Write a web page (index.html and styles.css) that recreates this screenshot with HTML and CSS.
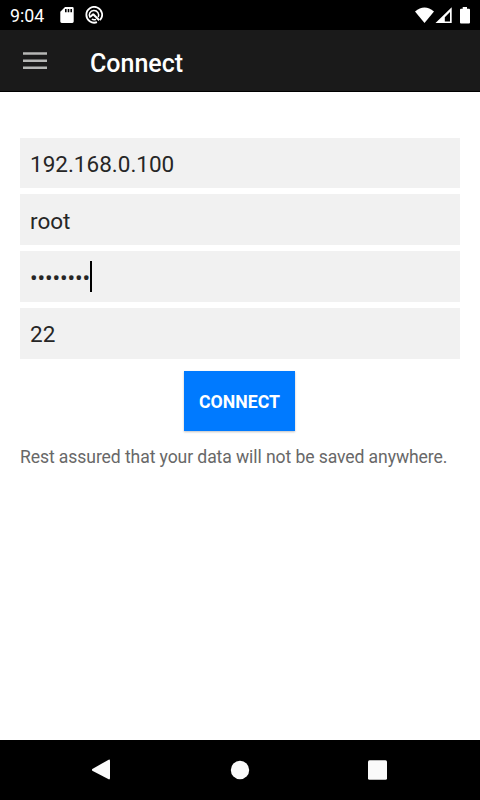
FILE: index.html
```html
<!DOCTYPE html>
<html lang="en">
<head>
<meta charset="utf-8">
<title>Connect</title>
<link rel="stylesheet" href="styles.css">
</head>
<body>
<div class="status">
  <span class="time">9:04</span>
  <svg class="sd" width="14" height="16" viewBox="0 0 14 16"><path fill="#fff" fill-rule="evenodd" d="M5 0h7.300Q13.700 0 13.700 1.400v13.200Q13.700 16 12.300 16H1.700Q.3 16 .3 14.600V4.800zM5 2v3.200h1.600V2zM7.700 2v3.200h1.600V2zM10.400 2v3.200H12V2z"/></svg>
  <svg class="ring" width="18" height="18" viewBox="0 0 18 18" fill="none" stroke="#fff"><path stroke-width="1.800" d="M15 14.200A7.900 7.900 0 1 0 12 16.200"/><path stroke-width="1.500" d="M5 11.600A4.700 4.700 0 1 1 13.200 11.200M6.800 13.200Q9 14.300 11 13.300"/><path stroke-width="2" d="M8 8L14.200 14.200M5 11L8.600 8"/></svg>
  <svg class="signals" width="56" height="18" viewBox="0 0 56 18" fill="#fff"><path d="M0 4.600Q9.500-3.600 19 4.600L9.500 16z"/><path fill-rule="evenodd" d="M36.700.3V16H20.500zM35 5L29.800 10.200V14.400H35z"/><path d="M47.700 0h4.300v1.700h2q1 0 1 1V15.500q0 1-1 1H46q-1 0-1-1V2.700q0-1 1-1h1.700z"/></svg>
</div>
<header class="appbar">
  <svg class="menu" width="24" height="18" viewBox="0 0 24 18" fill="#b6b7b5"><path d="M0 .2h24v2.600H0zM0 7.400h24V10H0zM0 14.400h24V17H0z"/></svg>
  <h1>Connect</h1>
</header>
<main>
  <div class="fields">
    <div class="field">192.168.0.100</div>
    <div class="field">root</div>
    <div class="field password"><span class="dots">••••••••</span><span class="caret"></span></div>
    <div class="field port">22</div>
  </div>
  <button class="connect">CONNECT</button>
  <p class="note">Rest assured that your data will not be saved anywhere.</p>
</main>
<nav class="navbar">
  <svg width="20" height="22" viewBox="0 0 20 22"><path fill="#fafafa" d="M.3 10.100L16.200.9Q18 0 18 2V19q0 2-1.800 1.100L.3 11.700Q-.5 10.900.3 10.100z"/></svg>
  <svg width="20" height="20" viewBox="0 0 20 20"><circle cx="10" cy="10" r="9.200" fill="#fafafa"/></svg>
  <svg width="20" height="20" viewBox="0 0 20 20"><rect x="0" y=".3" width="19" height="19.400" rx="1.500" fill="#fafafa"/></svg>
</nav>
</body>
</html>
```
FILE: styles.css
```css
* {
  box-sizing: border-box;
}
body {
  margin: 0;
  width: 480px;
  height: 800px;
  display: flex;
  flex-direction: column;
  overflow: hidden;
  background: #fff;
  font-family: Roboto, "Liberation Sans", sans-serif;
}
.status {
  height: 30px;
  display: flex;
  align-items: flex-start;
  background: #000;
  color: #fff;
}
.time {
  width: 50px;
  margin-left: 10px;
  font-size: 17.800px;
  line-height: 32px;
}
.sd {
  margin-top: 7px;
}
.ring {
  margin: 6px 0 0 11px;
}
.signals {
  margin: 7px 9px 0 auto;
}
.appbar {
  height: 62px;
  display: flex;
  align-items: center;
  padding-left: 23px;
  background: #1a1a1a;
  border-bottom: 1px solid #000;
}
.menu {
  margin-right: 43px;
}
h1 {
  margin: 6px 0 0;
  color: #fff;
  font-size: 25px;
  font-weight: 500;
  line-height: 30px;
}
main {
  flex: 1;
  display: flex;
  flex-direction: column;
  align-items: center;
  padding: 45.500px 20px 0;
}
.fields {
  width: 100%;
  display: grid;
  grid-auto-rows: 50.500px;
  gap: 6.400px;
}
.field {
  display: flex;
  align-items: center;
  padding: 3px 10px 0;
  background: #f1f1f1;
  color: #262626;
  font-size: 22.500px;
}
.password {
  padding-top: 0;
}
.port {
  padding-top: 2px;
}
.dots {
  padding-top: 2px;
  letter-spacing: -.1px;
}
.caret {
  width: 2px;
  height: 31px;
  background: #000;
}
.connect {
  width: 111px;
  height: 60px;
  margin: 12.500px 1px 0 0;
  padding: 2px 0 0;
  border: 0;
  background: #007aff;
  color: #fff;
  font: 700 17.700px Roboto, "Liberation Sans", sans-serif;
  box-shadow: 0 1px 2px rgba(0, 0, 0, .25);
}
.note {
  width: 100%;
  margin: 15px 0 0;
  color: #686868;
  font-size: 17.600px;
  letter-spacing: -.1px;
  line-height: 22px;
  white-space: nowrap;
}
.navbar {
  height: 60px;
  display: flex;
  justify-content: space-between;
  align-items: center;
  padding: 0 92px;
  background: #000;
}
```
